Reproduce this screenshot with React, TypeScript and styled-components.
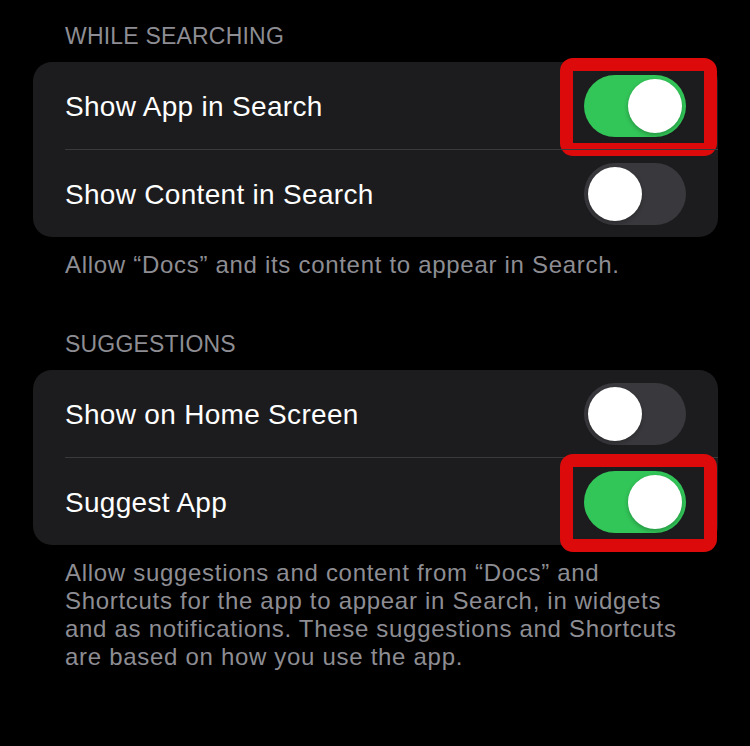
import React from "react";
import styled, { createGlobalStyle } from "styled-components";

const Global = createGlobalStyle`
  html, body { margin: 0; padding: 0; background: #000; }
  body { font-family: "Liberation Sans", Arial, sans-serif; -webkit-font-smoothing: antialiased; }
`;

const Page = styled.div`
  width: 750px;
  height: 746px;
  background: #000;
  box-sizing: border-box;
  padding: 22px 32px 0 33px;
  overflow: hidden;
`;

const Section = styled.section<{ $gap?: number }>`
  display: flex;
  flex-direction: column;
  margin-top: ${(p) => p.$gap ?? 0}px;
`;

const Header = styled.div`
  padding-left: 32px;
  font-size: 23px;
  line-height: 28px;
  letter-spacing: 0.2px;
  color: #8d8d93;
  text-transform: uppercase;
  margin-bottom: 12px;
`;

const Card = styled.div`
  background: #1c1c1e;
  border-radius: 19px;
  display: flex;
  flex-direction: column;
`;

const Row = styled.div<{ $divider?: boolean }>`
  position: relative;
  height: 87px;
  display: flex;
  align-items: center;
  justify-content: space-between;
  padding: 0 32px 0 32px;
  ${(p) =>
    p.$divider &&
    `
    &::after {
      content: "";
      position: absolute;
      left: 32px;
      right: 0;
      bottom: -1px;
      height: 1px;
      background: #3a3a3c;
    }
  `}
  & + & {
    margin-top: 1px;
  }
`;

const Label = styled.span`
  font-size: 28px;
  line-height: 34px;
  padding-top: 3px;
  letter-spacing: 0.3px;
  color: #ffffff;
`;

const SwitchWrap = styled.div`
  position: relative;
  flex: none;
`;

const Track = styled.div<{ $on: boolean }>`
  width: 102px;
  height: 62px;
  border-radius: 31px;
  background: ${(p) => (p.$on ? "#32c558" : "#39393d")};
  display: flex;
  align-items: center;
  justify-content: ${(p) => (p.$on ? "flex-end" : "flex-start")};
  padding: 0 4px;
  box-sizing: border-box;
`;

const Knob = styled.div`
  width: 54px;
  height: 54px;
  border-radius: 50%;
  background: #ffffff;
  box-shadow: 0 2px 4px rgba(0, 0, 0, 0.25);
`;

const Highlight = styled.div`
  position: absolute;
  left: -24px;
  right: -31px;
  top: -17px;
  bottom: -19px;
  border: 13px solid #dc0a0a;
  border-radius: 13px;
  pointer-events: none;
`;

const Footer = styled.p`
  margin: 14px 0 0 0;
  padding-left: 32px;
  font-size: 24px;
  line-height: 28px;
  letter-spacing: 0.7px;
  color: #8d8d93;
`;

type ToggleProps = { on: boolean; marked?: boolean };

const Toggle = ({ on, marked }: ToggleProps) => (
  <SwitchWrap>
    <Track $on={on}>
      <Knob />
    </Track>
    {marked && <Highlight />}
  </SwitchWrap>
);

export default function App() {
  return (
    <>
      <Global />
      <Page>
        <Section>
          <Header>While Searching</Header>
          <Card>
            <Row $divider>
              <Label>Show App in Search</Label>
              <Toggle on marked />
            </Row>
            <Row>
              <Label>Show Content in Search</Label>
              <Toggle on={false} />
            </Row>
          </Card>
          <Footer>Allow “Docs” and its content to appear in Search.</Footer>
        </Section>
        <Section $gap={51}>
          <Header>Suggestions</Header>
          <Card>
            <Row $divider>
              <Label>Show on Home Screen</Label>
              <Toggle on={false} />
            </Row>
            <Row>
              <Label>Suggest App</Label>
              <Toggle on marked />
            </Row>
          </Card>
          <Footer>
            Allow suggestions and content from “Docs” and
            <br />
            Shortcuts for the app to appear in Search, in widgets
            <br />
            and as notifications. These suggestions and Shortcuts
            <br />
            are based on how you use the app.
          </Footer>
        </Section>
      </Page>
    </>
  );
}
